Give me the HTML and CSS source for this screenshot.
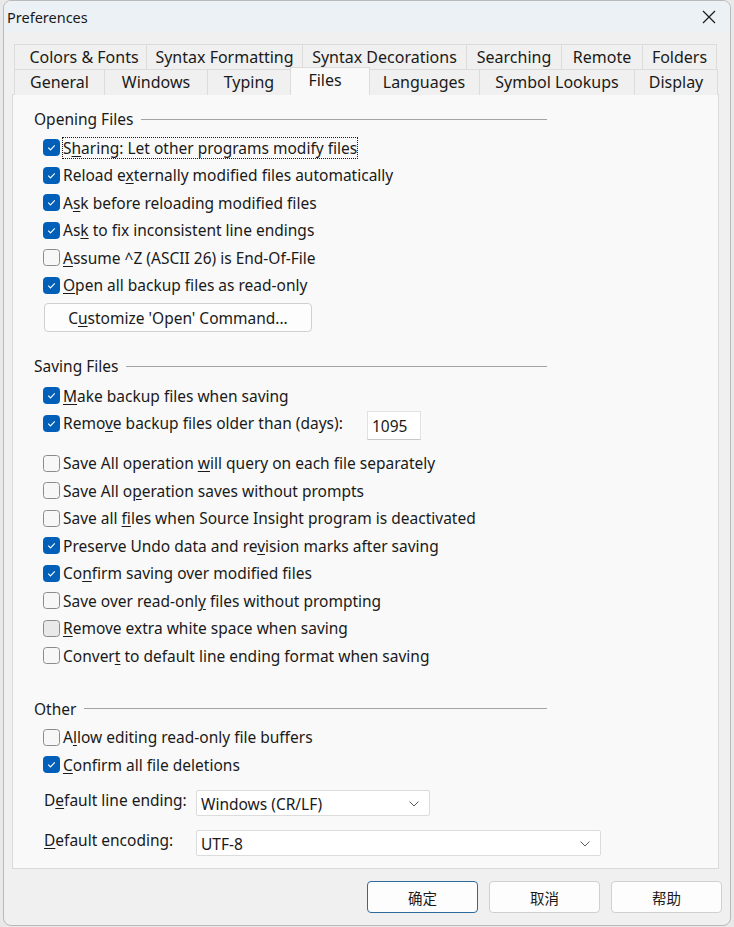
FILE: index.html
```html
<!DOCTYPE html>
<html>
<head>
<meta charset="utf-8">
<link rel="stylesheet" href="styles.css">
</head>
<body>
<div class="window">
  <div class="titlebar">
    <span class="title">Preferences</span>
    <span class="close"><svg width="14" height="14" viewBox="0 0 14 14"><path d="M1 1L13 13M13 1L1 13" stroke="#1a1a1a" stroke-width="1.2" fill="none"/></svg></span>
  </div>
  <div class="tabs">
    <div class="tabrow row1">
      <div class="tab first">Colors &amp; Fonts</div>
      <div class="tab">Syntax Formatting</div>
      <div class="tab">Syntax Decorations</div>
      <div class="tab">Searching</div>
      <div class="tab">Remote</div>
      <div class="tab last">Folders</div>
    </div>
    <div class="tabrow row2">
      <div class="tab">General</div>
      <div class="tab">Windows</div>
      <div class="tab">Typing</div>
      <div class="tab active">Files</div>
      <div class="tab">Languages</div>
      <div class="tab">Symbol Lookups</div>
      <div class="tab last">Display</div>
    </div>
  </div>
  <div class="panel">
    <div class="group-title g-open"><span>Opening Files</span></div>
    <div class="rows r-open">
      <div class="row"><span class="cb on"><svg viewBox="0 0 16 16"><path d="M4.5 8.2l2.4 2.3 4.6-4.8" stroke="#fff" stroke-width="1.2" fill="none"/></svg></span><span class="lbl focus">S<u>h</u>aring: Let other programs modify files</span></div>
      <div class="row"><span class="cb on"><svg viewBox="0 0 16 16"><path d="M4.5 8.2l2.4 2.3 4.6-4.8" stroke="#fff" stroke-width="1.2" fill="none"/></svg></span><span class="lbl">Reload e<u>x</u>ternally modified files automatically</span></div>
      <div class="row"><span class="cb on"><svg viewBox="0 0 16 16"><path d="M4.5 8.2l2.4 2.3 4.6-4.8" stroke="#fff" stroke-width="1.2" fill="none"/></svg></span><span class="lbl">A<u>s</u>k before reloading modified files</span></div>
      <div class="row"><span class="cb on"><svg viewBox="0 0 16 16"><path d="M4.5 8.2l2.4 2.3 4.6-4.8" stroke="#fff" stroke-width="1.2" fill="none"/></svg></span><span class="lbl">As<u>k</u> to fix inconsistent line endings</span></div>
      <div class="row"><span class="cb"></span><span class="lbl"><u>A</u>ssume ^Z (ASCII 26) is End-Of-File</span></div>
      <div class="row"><span class="cb on"><svg viewBox="0 0 16 16"><path d="M4.5 8.2l2.4 2.3 4.6-4.8" stroke="#fff" stroke-width="1.2" fill="none"/></svg></span><span class="lbl"><u>O</u>pen all backup files as read-only</span></div>
    </div>
    <button class="btn customize">C<u>u</u>stomize 'Open' Command...</button>

    <div class="group-title g-save"><span>Saving Files</span></div>
    <div class="rows r-save">
      <div class="row"><span class="cb on"><svg viewBox="0 0 16 16"><path d="M4.5 8.2l2.4 2.3 4.6-4.8" stroke="#fff" stroke-width="1.2" fill="none"/></svg></span><span class="lbl"><u>M</u>ake backup files when saving</span></div>
      <div class="row row-days">
        <div class="days-check"><span class="cb on"><svg viewBox="0 0 16 16"><path d="M4.5 8.2l2.4 2.3 4.6-4.8" stroke="#fff" stroke-width="1.2" fill="none"/></svg></span><span class="lbl">Remo<u>v</u>e backup files older than (days):</span></div>
        <div class="days-input">1095</div>
      </div>
      <div class="row"><span class="cb"></span><span class="lbl">Save All operation <u>w</u>ill query on each file separately</span></div>
      <div class="row"><span class="cb"></span><span class="lbl">Save All o<u>p</u>eration saves without prompts</span></div>
      <div class="row"><span class="cb"></span><span class="lbl">Save all <u>f</u>iles when Source Insight program is deactivated</span></div>
      <div class="row"><span class="cb on"><svg viewBox="0 0 16 16"><path d="M4.5 8.2l2.4 2.3 4.6-4.8" stroke="#fff" stroke-width="1.2" fill="none"/></svg></span><span class="lbl">Preserve Undo data and re<u>v</u>ision marks after saving</span></div>
      <div class="row"><span class="cb on"><svg viewBox="0 0 16 16"><path d="M4.5 8.2l2.4 2.3 4.6-4.8" stroke="#fff" stroke-width="1.2" fill="none"/></svg></span><span class="lbl">Co<u>n</u>firm saving over modified files</span></div>
      <div class="row"><span class="cb"></span><span class="lbl">Save over read-onl<u>y</u> files without prompting</span></div>
      <div class="row"><span class="cb hover"></span><span class="lbl"><u>R</u>emove extra white space when saving</span></div>
      <div class="row"><span class="cb"></span><span class="lbl">Conver<u>t</u> to default line ending format when saving</span></div>
    </div>

    <div class="group-title g-other"><span>Other</span></div>
    <div class="rows r-other">
      <div class="row"><span class="cb"></span><span class="lbl">A<u>l</u>low editing read-only file buffers</span></div>
      <div class="row"><span class="cb on"><svg viewBox="0 0 16 16"><path d="M4.5 8.2l2.4 2.3 4.6-4.8" stroke="#fff" stroke-width="1.2" fill="none"/></svg></span><span class="lbl"><u>C</u>onfirm all file deletions</span></div>
    </div>
    <div class="field f-ending">
      <span class="flabel">D<u>e</u>fault line ending:</span>
      <div class="select s-ending"><span>Windows (CR/LF)</span><svg width="10" height="6" viewBox="0 0 10 6"><path d="M0.5 0.5L5 5L9.5 0.5" stroke="#5a5a5a" stroke-width="1" fill="none"/></svg></div>
    </div>
    <div class="field f-enc">
      <span class="flabel"><u>D</u>efault encoding:</span>
      <div class="select s-enc"><span>UTF-8</span><svg width="10" height="6" viewBox="0 0 10 6"><path d="M0.5 0.5L5 5L9.5 0.5" stroke="#5a5a5a" stroke-width="1" fill="none"/></svg></div>
    </div>
  </div>
  <div class="buttons">
    <button class="btn dlg default">确定</button>
    <button class="btn dlg">取消</button>
    <button class="btn dlg">帮助</button>
  </div>
</div>
</body>
</html>
```

FILE: styles.css
```css
* { box-sizing: border-box; }
html, body { margin: 0; padding: 0; }
body {
  background: #e9e9e9;
  font-family: "Noto Sans", "Open Sans", sans-serif;
  font-size: 15.5px;
  color: #1a1a1a;
  width: 734px;
  height: 927px;
  overflow: hidden;
}
.window {
  margin-left: 3px;
  width: 728px;
  height: 926px;
  border: 1px solid #b9b9b9;
  border-radius: 8px;
  background: #f0f0f0;
  overflow: hidden;
  display: flex;
  flex-direction: column;
}
.titlebar {
  height: 31px;
  flex: none;
  background: #ebf1f5;
  display: flex;
  align-items: center;
  justify-content: space-between;
  padding: 0 14px 0 3px;
}
.title { font-size: 14.5px; color: #1a1a1a; }
.close { display: flex; }
.tabs { margin: 12px 0 0 10px; position: relative; z-index: 1; font-size: 16px; }
.tabrow { display: grid; }
.row1 { grid-template-columns: 132px 156px 164px 95px 81px 75px; height: 25px; }
.row2 { grid-template-columns: 90px 103px 83px 79px 110px 155px 84px; height: 25px; }
.tab {
  border-top: 1px solid #dcdcdc;
  border-left: 1px solid #dcdcdc;
  background: #f0f0f0;
  display: flex;
  align-items: center;
  justify-content: center;
  padding-bottom: 1px;
  white-space: nowrap;
}
.tab.first { padding-left: 7px; }
.tab.last { border-right: 1px solid #dcdcdc; }
.tab.active {
  background: #f9f9f9;
  border-right: 1px solid #dcdcdc;
  margin-top: -2px;
  height: 28px;
  padding-bottom: 4px;
  padding-right: 10px;
  position: relative;
  z-index: 2;
  margin-right: -1px;
}
.tab.active + .tab { border-left: none; }
.panel {
  margin: 0 11px 0 8px;
  height: 775px;
  background: #f9f9f9;
  border: 1px solid #dadada;
  padding: 13px 0 0 21px;
  flex: none;
}
.group-title {
  display: flex;
  align-items: center;
  height: 22px;
  width: 513px;
}
.group-title::after {
  content: "";
  flex: 1;
  border-top: 1px solid #a3a3a3;
  margin-left: 8px;
}
.rows { padding-left: 9px; }
.r-open { margin-top: 4px; }
.r-save { margin-top: 5px; }
.r-other { margin-top: 4px; }
.g-save { margin-top: 23px; }
.g-other { margin-top: 28px; }
.row {
  display: flex;
  align-items: center;
  height: 27.5px;
}
.cb {
  width: 17px;
  height: 17px;
  border: 1px solid #8b8b8b;
  border-radius: 3.5px;
  background: #f7f7f7;
  flex: none;
  margin-right: 3px;
  display: flex;
}
.cb.hover { background: #e9e9e9; }
.cb.on { background: #005fb8; border-color: #005fb8; }
.cb svg { width: 15px; height: 15px; }
.lbl { white-space: nowrap; line-height: 20px; }
.lbl.focus { outline: 1px dotted #1a1a1a; outline-offset: 0; }
u { text-underline-offset: 2px; }
.btn {
  font-family: inherit;
  font-size: 15.5px;
  color: #1a1a1a;
  background: #fdfdfd;
  border: 1px solid #d0d0d0;
  border-radius: 4px;
  padding: 0;
}
.customize {
  display: block;
  margin: 4px 0 0 10px;
  width: 268px;
  height: 29px;
}
.row-days { height: 40px; align-items: flex-start; }
.days-check { display: flex; align-items: center; height: 27.5px; width: 324px; }
.days-input {
  margin-top: 1.5px;
  width: 54px;
  height: 29px;
  background: #fff;
  border: 1px solid #e2e2e2;
  border-bottom-color: #c8c8c8;
  padding: 3px 0 0 4px;
  line-height: 22px;
}
.field { display: flex; align-items: flex-start; padding-left: 10px; }
.f-ending { margin-top: 11px; }
.f-enc { margin-top: 14px; }
.flabel { width: 152px; line-height: 20px; white-space: nowrap; }
.select {
  height: 26px;
  background: #fff;
  border: 1px solid #dcdcdc;
  border-radius: 2px;
  display: flex;
  align-items: center;
  justify-content: space-between;
  padding: 2px 10px 0 4px;
}
.s-ending { width: 234px; }
.s-enc { width: 405px; }
.buttons {
  display: flex;
  justify-content: flex-end;
  gap: 11px;
  margin: 12px 8px 0 0;
}
.dlg {
  width: 111px;
  height: 32px;
  font-family: "Noto Sans CJK SC", sans-serif;
  font-size: 14.5px;
}
.default { border-color: #2f6a9c; }
```
